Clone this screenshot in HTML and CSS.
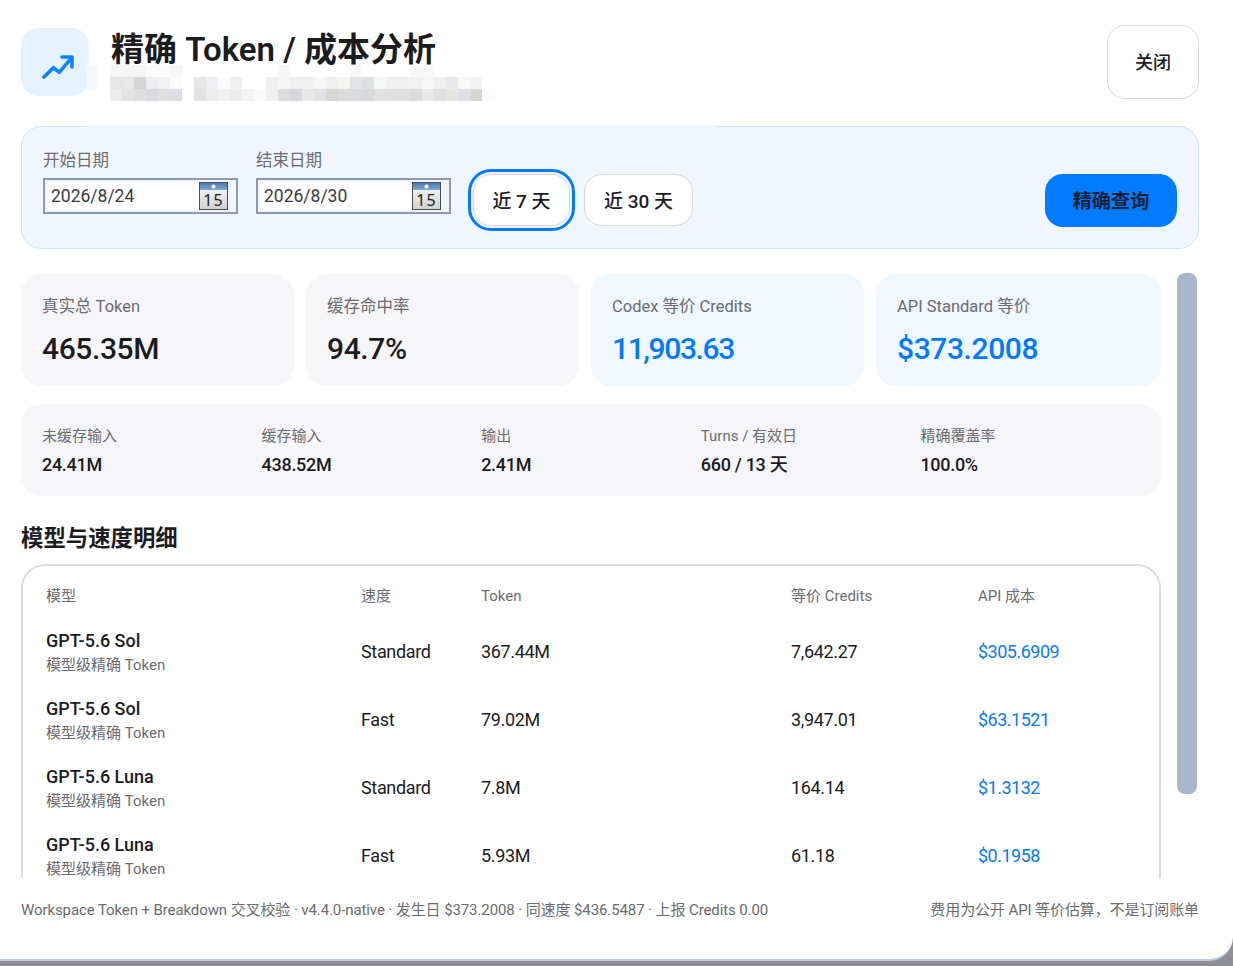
FILE: index.html
```html
<!DOCTYPE html>
<html lang="zh-CN">
<head>
  <meta charset="UTF-8">
  <title>精确 Token / 成本分析</title>
  <link rel="stylesheet" href="styles.css">
</head>
<body>
  <div class="modal">
    <header class="head">
      <div class="head-icon">
        <svg width="34" height="28" viewBox="0 0 34 28" fill="none" stroke="#0a84ff" stroke-width="3.6" stroke-linecap="round" stroke-linejoin="round">
          <polyline points="4,23 13.3,13.7 19.3,18.3 31.7,3.7"/>
          <polyline points="22,3 32,3 32,13"/>
        </svg>
      </div>
      <div class="head-text">
        <h1>精确 Token / 成本分析</h1>
        <!-- blurred subtitle, drawn as 12px mosaic cells -->
        <svg class="mosaic" width="408" height="36" viewBox="0 0 408 36">
          <rect x="0" y="0" width="12" height="24" fill="#f4f9ff"/>
          <rect x="24" y="0" width="36" height="12" fill="#f6f6f6"/>
          <rect x="60" y="0" width="24" height="12" fill="#fbfbfb"/>
          <rect x="84" y="0" width="12" height="12" fill="#f6f6f6"/>
          <rect x="192" y="0" width="12" height="12" fill="#f6f6f6"/>
          <rect x="264" y="0" width="12" height="12" fill="#f8f8f8"/>
          <rect x="324" y="0" width="24" height="12" fill="#f8f8f8"/>

          <rect x="24" y="12" width="12" height="12" fill="#e6e6e6"/>
          <rect x="36" y="12" width="12" height="12" fill="#e8e8e8"/>
          <rect x="48" y="12" width="12" height="12" fill="#d4d4d6"/>
          <rect x="60" y="12" width="12" height="12" fill="#eeeef2"/>
          <rect x="72" y="12" width="12" height="12" fill="#f1f1f1"/>
          <rect x="84" y="12" width="12" height="12" fill="#fafcfa"/>
          <rect x="108" y="12" width="12" height="12" fill="#e6e6e4"/>
          <rect x="120" y="12" width="12" height="12" fill="#eeeff2"/>
          <rect x="132" y="12" width="12" height="12" fill="#fafafa"/>
          <rect x="144" y="12" width="12" height="12" fill="#f0f0f0"/>
          <rect x="180" y="12" width="12" height="12" fill="#f0f0f0"/>
          <rect x="192" y="12" width="12" height="12" fill="#f5f5f5"/>
          <rect x="204" y="12" width="24" height="12" fill="#f0f0f0"/>
          <rect x="228" y="12" width="12" height="12" fill="#f7f7f5"/>
          <rect x="240" y="12" width="12" height="12" fill="#f0f0f0"/>
          <rect x="252" y="12" width="12" height="12" fill="#f6f5f0"/>
          <rect x="264" y="12" width="12" height="12" fill="#e2e3e6"/>
          <rect x="276" y="12" width="12" height="12" fill="#dfe0e3"/>
          <rect x="288" y="12" width="12" height="12" fill="#f5f7f6"/>
          <rect x="300" y="12" width="24" height="12" fill="#f0f0f0"/>
          <rect x="324" y="12" width="12" height="12" fill="#eff1f3"/>
          <rect x="336" y="12" width="12" height="12" fill="#f6f6f6"/>
          <rect x="348" y="12" width="12" height="12" fill="#f0f0f0"/>
          <rect x="360" y="12" width="12" height="12" fill="#e9e9eb"/>
          <rect x="372" y="12" width="12" height="12" fill="#f8f8f8"/>
          <rect x="384" y="12" width="12" height="12" fill="#f3f3f3"/>

          <rect x="24" y="24" width="12" height="12" fill="#ececec"/>
          <rect x="36" y="24" width="12" height="12" fill="#e2e2e2"/>
          <rect x="48" y="24" width="12" height="12" fill="#dedede"/>
          <rect x="60" y="24" width="12" height="12" fill="#dadade"/>
          <rect x="72" y="24" width="12" height="12" fill="#dedede"/>
          <rect x="84" y="24" width="12" height="12" fill="#dcdce2"/>
          <rect x="108" y="24" width="12" height="12" fill="#e2e2e2"/>
          <rect x="120" y="24" width="12" height="12" fill="#ececec"/>
          <rect x="132" y="24" width="12" height="12" fill="#f0f1f3"/>
          <rect x="144" y="24" width="12" height="12" fill="#ebebeb"/>
          <rect x="156" y="24" width="12" height="12" fill="#f3f3f3"/>
          <rect x="168" y="24" width="12" height="12" fill="#fafafa"/>
          <rect x="180" y="24" width="12" height="12" fill="#f0f0f0"/>
          <rect x="192" y="24" width="12" height="12" fill="#dcdcdc"/>
          <rect x="204" y="24" width="12" height="12" fill="#d6d6dc"/>
          <rect x="216" y="24" width="12" height="12" fill="#e8e8e6"/>
          <rect x="228" y="24" width="12" height="12" fill="#e0e1e3"/>
          <rect x="240" y="24" width="12" height="12" fill="#d8d6d2"/>
          <rect x="252" y="24" width="12" height="12" fill="#dadbdd"/>
          <rect x="264" y="24" width="12" height="12" fill="#dadbde"/>
          <rect x="276" y="24" width="12" height="12" fill="#d8d9db"/>
          <rect x="288" y="24" width="24" height="12" fill="#e0e0e0"/>
          <rect x="312" y="24" width="12" height="12" fill="#dedede"/>
          <rect x="324" y="24" width="12" height="12" fill="#dadada"/>
          <rect x="336" y="24" width="12" height="12" fill="#e8e8e6"/>
          <rect x="348" y="24" width="12" height="12" fill="#e0e0e2"/>
          <rect x="360" y="24" width="12" height="12" fill="#e6e4e0"/>
          <rect x="372" y="24" width="12" height="12" fill="#dedee4"/>
          <rect x="384" y="24" width="12" height="12" fill="#d8d6d2"/>
          <rect x="396" y="24" width="12" height="12" fill="#fafcff"/>
        </svg>
      </div>
      <button class="close-btn">关闭</button>
    </header>

    <section class="filter">
      <div class="field">
        <label>开始日期</label>
        <div class="date-box">
          <span class="date-val">2026/8/24</span>
          <svg class="cal" width="30" height="28" viewBox="0 0 30 28">
            <defs>
              <linearGradient id="calBody" x1="0" y1="0" x2="0" y2="1">
                <stop offset="0" stop-color="#fafafa"/>
                <stop offset="1" stop-color="#cfd2d5"/>
              </linearGradient>
              <linearGradient id="calBand" x1="0" y1="0" x2="0" y2="1">
                <stop offset="0" stop-color="#4a78a8"/>
                <stop offset="1" stop-color="#7fa8d0"/>
              </linearGradient>
            </defs>
            <rect x=".5" y=".5" width="28" height="27" fill="url(#calBody)" stroke="#4a5056"/>
            <rect x="1" y="1" width="27" height="7" fill="url(#calBand)"/>
            <circle cx="14.5" cy="4.5" r="2" fill="#fff"/>
            <text x="14.5" y="24" text-anchor="middle" class="cal-num">15</text>
          </svg>
        </div>
      </div>
      <div class="field">
        <label>结束日期</label>
        <div class="date-box">
          <span class="date-val">2026/8/30</span>
          <svg class="cal" width="30" height="28" viewBox="0 0 30 28">
            <rect x=".5" y=".5" width="28" height="27" fill="url(#calBody)" stroke="#4a5056"/>
            <rect x="1" y="1" width="27" height="7" fill="url(#calBand)"/>
            <circle cx="14.5" cy="4.5" r="2" fill="#fff"/>
            <text x="14.5" y="24" text-anchor="middle" class="cal-num">15</text>
          </svg>
        </div>
      </div>
      <button class="range-btn focused">近 7 天</button>
      <button class="range-btn">近 30 天</button>
      <button class="query-btn">精确查询</button>
    </section>

    <div class="scroll-area">
      <div class="thumb"></div>
      <div class="stats">
        <div class="stat"><div class="stat-label">真实总 Token</div><div class="stat-value">465.35M</div></div>
        <div class="stat"><div class="stat-label">缓存命中率</div><div class="stat-value">94.7%</div></div>
        <div class="stat blue"><div class="stat-label">Codex 等价 Credits</div><div class="stat-value tight">11,903.63</div></div>
        <div class="stat blue"><div class="stat-label">API Standard 等价</div><div class="stat-value">$373.2008</div></div>
      </div>

      <div class="strip">
        <div><div class="strip-label">未缓存输入</div><div class="strip-value">24.41M</div></div>
        <div><div class="strip-label">缓存输入</div><div class="strip-value">438.52M</div></div>
        <div><div class="strip-label">输出</div><div class="strip-value">2.41M</div></div>
        <div><div class="strip-label">Turns / 有效日</div><div class="strip-value">660 / 13 天</div></div>
        <div><div class="strip-label">精确覆盖率</div><div class="strip-value">100.0%</div></div>
      </div>

      <h2>模型与速度明细</h2>

      <div class="table-wrap">
        <table>
          <colgroup>
            <col class="c-model"><col class="c-speed"><col class="c-token"><col class="c-credits"><col>
          </colgroup>
          <thead>
            <tr><th>模型</th><th>速度</th><th>Token</th><th>等价 Credits</th><th>API 成本</th></tr>
          </thead>
          <tbody>
            <tr>
              <td class="model-cell"><div class="model">GPT-5.6 Sol</div><div class="sub">模型级精确 Token</div></td>
              <td>Standard</td><td>367.44M</td><td>7,642.27</td><td class="cost">$305.6909</td>
            </tr>
            <tr>
              <td class="model-cell"><div class="model">GPT-5.6 Sol</div><div class="sub">模型级精确 Token</div></td>
              <td>Fast</td><td>79.02M</td><td>3,947.01</td><td class="cost">$63.1521</td>
            </tr>
            <tr>
              <td class="model-cell"><div class="model">GPT-5.6 Luna</div><div class="sub">模型级精确 Token</div></td>
              <td>Standard</td><td>7.8M</td><td>164.14</td><td class="cost">$1.3132</td>
            </tr>
            <tr>
              <td class="model-cell"><div class="model">GPT-5.6 Luna</div><div class="sub">模型级精确 Token</div></td>
              <td>Fast</td><td>5.93M</td><td>61.18</td><td class="cost">$0.1958</td>
            </tr>
          </tbody>
        </table>
      </div>
    </div>

    <footer class="foot">
      <span>Workspace Token + Breakdown 交叉校验 · v4.4.0-native · 发生日 $373.2008 · 同速度 $436.5487 · 上报 Credits 0.00</span>
      <span>费用为公开 API 等价估算，不是订阅账单</span>
    </footer>
  </div>
</body>
</html>
```

FILE: styles.css
```css
* {
  box-sizing: border-box;
}

html, body {
  margin: 0;
  height: 100%;
}

body {
  background: #8f9095;
  overflow: hidden;
  font-family: Roboto, "Noto Sans CJK SC", sans-serif;
  color: #1c1c1e;
}

button {
  font-family: Roboto, "Noto Sans CJK SC", sans-serif;
  color: #1c1c1e;
}

.modal {
  height: 961px;
  background: #fff;
  border-bottom: 2px solid #b5cfea;
  border-bottom-right-radius: 24px;
  padding: 25px 34px 0 21px;
  display: flex;
  flex-direction: column;
}

.head {
  display: flex;
  align-items: flex-start;
  height: 101px;
  flex: none;
}

.head-icon {
  width: 68px;
  height: 68px;
  margin-top: 3px;
  border-radius: 18px;
  background: #e5f2ff;
  display: flex;
  align-items: center;
  justify-content: center;
  padding: 12px 0 0 4px;
}

.head-text {
  margin-left: 22px;
  flex: 1;
}

h1 {
  margin: 0;
  padding-top: 1px;
  font-size: 33px;
  line-height: 47px;
  font-weight: 600;
}

.mosaic {
  display: block;
  margin-top: -8px;
  margin-left: -25px;
}

.close-btn {
  width: 92px;
  height: 74px;
  padding-bottom: 4px;
  background: #fff;
  border: 1.5px solid #d8d8de;
  border-radius: 18px;
  font-size: 18px;
  font-weight: 500;
}

.filter {
  position: relative;
  height: 123px;
  flex: none;
  background: #f1f6fe;
  border: 1px solid #cfe3fb;
  border-radius: 20px;
  padding: 22px 21px 0;
  display: flex;
  align-items: flex-start;
}

.filter::before {
  content: "";
  position: absolute;
  left: 64px;
  top: -2px;
  width: 631px;
  height: 3px;
  background: #f1f6fe;
}

.field {
  width: 195px;
  margin-right: 18px;
}

.field label {
  display: block;
  font-size: 16.5px;
  line-height: 24px;
  color: #6b6b70;
  margin-bottom: 5px;
}

.date-box {
  height: 36px;
  border: 2px solid #8d9cab;
  background: #f1f6fe;
  display: flex;
  align-items: center;
  padding: 2px 7px 2px 2px;
}

.date-val {
  flex: 1;
  background: #fff;
  height: 100%;
  padding-left: 4px;
  font-size: 17.5px;
  line-height: 29px;
  color: #3c3c40;
}

.cal {
  flex: none;
  margin-left: 0;
}

.cal-num {
  font: 16px "Noto Sans", sans-serif;
  letter-spacing: 1px;
  fill: #222;
}

.range-btn {
  height: 52px;
  margin-top: 25px;
  margin-right: 14px;
  padding: 0 0 2px;
  width: 109px;
  background: #fff;
  border: 1.5px solid #d8d8de;
  border-radius: 18px;
  font-size: 19px;
  font-weight: 500;
}

.range-btn.focused {
  width: 97px;
  margin-left: 4px;
  outline: 3px solid #007aff;
  outline-offset: 2px;
}

.query-btn {
  margin-left: auto;
  margin-top: 25px;
  width: 132px;
  height: 53px;
  padding: 0 0 2px;
  background: #007aff;
  border: 0;
  border-radius: 18px;
  font-size: 19.2px;
  font-weight: 600;
  color: #10233a;
}

.scroll-area {
  position: relative;
  margin-top: 24px;
  flex: 1;
  min-height: 0;
  overflow: hidden;
  padding-right: 38px;
}

.thumb {
  position: absolute;
  right: 2px;
  top: 0;
  width: 20px;
  height: 521px;
  border-radius: 8px;
  background: #a8b6c7;
}

.stats {
  display: grid;
  grid-template-columns: 273px 273px 273px 285px;
  gap: 12px;
  margin-top: 1px;
}

.stat {
  height: 112px;
  border-radius: 20px;
  background: #f6f6f8;
  padding: 21px 21px 0;
}

.stat.blue {
  background: #f0f7ff;
}

.stat-label {
  font-size: 16.5px;
  line-height: 24px;
  color: #6b6b70;
}

.stat-value {
  font-size: 30px;
  line-height: 42px;
  margin-top: 9px;
  font-weight: 500;
  letter-spacing: -.4px;
}

.stat-value.tight {
  letter-spacing: -1.4px;
}

.blue .stat-value {
  color: #007aff;
}

.strip {
  margin-top: 18px;
  height: 92px;
  border-radius: 20px;
  background: #f6f6f8;
  padding: 21px 21px 0;
  display: grid;
  grid-template-columns: repeat(5, 1fr);
}

.strip-label {
  font-size: 15px;
  line-height: 22px;
  color: #6b6b70;
}

.strip-value {
  font-size: 18px;
  line-height: 26px;
  margin-top: 5px;
  font-weight: 500;
  letter-spacing: -.3px;
}

h2 {
  margin: 26px 0 9px;
  font-size: 22.4px;
  line-height: 33px;
  font-weight: 600;
}

.table-wrap {
  border: 2px solid #dcdde3;
  border-radius: 24px;
  padding: 0 23px 20px;
}

table {
  width: 100%;
  border-collapse: collapse;
  table-layout: fixed;
}

.c-model { width: 315px; }
.c-speed { width: 120px; }
.c-token { width: 310px; }
.c-credits { width: 187px; }

th {
  text-align: left;
  font-size: 15px;
  line-height: 22px;
  font-weight: 400;
  color: #6b6b70;
  height: 51px;
  padding: 19px 0 0;
  vertical-align: baseline;
}

td {
  padding: 0;
  height: 68px;
  font-size: 18px;
  letter-spacing: -.35px;
  vertical-align: middle;
}

td.model-cell {
  padding-top: 1px;
  letter-spacing: 0;
}

.model {
  font-size: 18px;
  line-height: 26px;
  font-weight: 500;
}

.sub {
  font-size: 15px;
  line-height: 22px;
  color: #6b6b70;
}

.cost {
  color: #0a7bf0;
  letter-spacing: -.5px;
}

.foot {
  flex: none;
  height: 81px;
  background: #fff;
  display: flex;
  justify-content: space-between;
  padding-top: 21px;
  font-size: 15px;
  line-height: 22px;
  letter-spacing: -.1px;
  color: #6b6b70;
}
```
